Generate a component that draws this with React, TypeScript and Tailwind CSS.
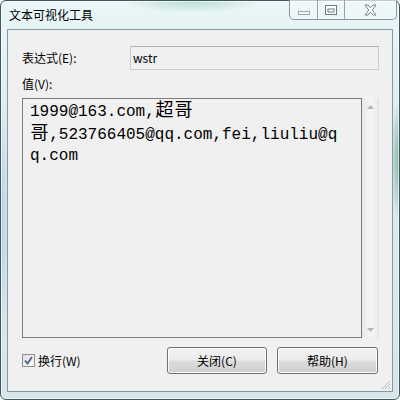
import { useState } from 'react';

const ui = "font-['Noto_Sans_CJK_SC','Noto_Sans',sans-serif]";
const mono = "font-['Liberation_Mono','Noto_Sans_CJK_SC',monospace]";

function Cjk({ ch }: { ch: string }) {
  return <span className="inline-block w-[19.2px] text-center text-[18px] leading-[21.5px]">{ch}</span>;
}

function WinButton({ label }: { label: string }) {
  return (
    <button
      className={`h-[27px] rounded-[3px] border border-[#707070] bg-[linear-gradient(#f2f2f2_0%,#ebebeb_48%,#dddddd_52%,#cfcfcf_100%)] shadow-[inset_0_0_0_1px_#fbfbfb] text-[12px] leading-none text-black ${ui}`}
    >
      {label}
    </button>
  );
}

export default function App() {
  const [wrap, setWrap] = useState(true);

  return (
    <div className="w-[400px] h-[400px] bg-[#f4f8fa]">
      <div className="w-[400px] h-[400px] rounded-[6px] border border-[#44565f] shadow-[inset_0_0_0_1px_rgba(255,255,255,0.6)] bg-[radial-gradient(ellipse_70px_12px_at_48%_0%,rgba(90,170,140,0.35),transparent),radial-gradient(ellipse_8px_60px_at_100%_40%,rgba(60,130,90,0.55),transparent),radial-gradient(ellipse_8px_120px_at_0%_55%,rgba(140,180,220,0.5),transparent),linear-gradient(180deg,#eaf6f7_0%,#d8ebef_35%,#d5e7eb_100%)] flex flex-col px-[6px] pb-[7px]">
        {/* Title bar */}
        <div className="h-[28px] flex items-start justify-between">
          <span className={`mt-[6px] ml-[2px] text-[12px] leading-[16px] text-black ${ui}`}>文本可视化工具</span>
          <div className="-mt-[1px] -mr-[4px] flex h-[20px] rounded-b-[5px] border border-t-0 border-[#8595a0] bg-[linear-gradient(rgba(255,255,255,0.35),rgba(255,255,255,0.15))] shadow-[inset_0_0_0_1px_rgba(255,255,255,0.5)] overflow-hidden">
            <div className="w-[28px] flex items-center justify-center border-r border-[#93a3ab]">
              <svg width="14" height="6" viewBox="0 0 14 6" className="mt-[6px]">
                <rect x="1.5" y="1.5" width="11" height="3" fill="#ffffff" stroke="#9aa4aa" />
              </svg>
            </div>
            <div className="w-[27px] flex items-center justify-center border-r border-[#93a3ab]">
              <svg width="12" height="10" viewBox="0 0 12 10">
                <rect x="0.5" y="0.5" width="11" height="9" fill="#ffffff" stroke="#6f7b82" />
                <rect x="3" y="4" width="6" height="3" fill="#ffffff" stroke="#6f7b82" />
              </svg>
            </div>
            <div className="w-[51px] flex items-center justify-center">
              <svg width="13" height="12" viewBox="0 0 13 12">
                <path
                  d="M1 1 L4 1 L6.5 3.8 L9 1 L12 1 L8.3 6 L12 11 L9 11 L6.5 8.2 L4 11 L1 11 L4.7 6 Z"
                  fill="#ffffff"
                  stroke="#737f86"
                  strokeWidth="1"
                  strokeLinejoin="round"
                />
              </svg>
            </div>
          </div>
        </div>

        {/* Client area */}
        <div className="relative flex-1 flex flex-col border border-[#8899a4] bg-[#f0f0f0] pl-[14px] pr-[13px] pt-[16px]">
          <div className="h-[24px] flex items-center">
            <span className={`w-[108px] text-[12px] text-black ${ui}`}>表达式(E):</span>
            <div className={`flex-1 h-[24px] flex items-center border border-[#c5ced6] border-t-[#abb4bd] bg-[#f0f0f0] pl-[2px] text-[12px] text-black ${ui}`}>
              wstr
            </div>
          </div>

          <div className={`mt-[6px] h-[16px] text-[12px] leading-[16px] text-black ${ui}`}>值(V):</div>

          <div className="mt-[6px] h-[240px] flex">
            <div className={`flex-1 border border-[#7c7c7c] bg-[#f0f0f0] pl-[7px] pt-[2px] text-[16px] leading-[21.5px] text-black ${mono}`}>
              <div className="whitespace-pre">
                1999@163.com,<Cjk ch="超" />
                <Cjk ch="哥" />
              </div>
              <div className="whitespace-pre">
                <Cjk ch="哥" />,523766405@qq.com,fei,liuliu@q
              </div>
              <div className="whitespace-pre">q.com</div>
            </div>
            <div className="w-[17px] flex flex-col justify-between bg-[linear-gradient(90deg,#e8e8e8,#f3f3f3_40%,#f3f3f3_70%,#e9e9e9)] border-r border-[#e2e2e2]">
              <div className="h-[17px] flex items-center justify-center">
                <svg width="7" height="4" viewBox="0 0 7 4">
                  <path d="M0 4 L3.5 0 L7 4 Z" fill="#b5b5b5" />
                </svg>
              </div>
              <div className="h-[17px] flex items-center justify-center">
                <svg width="7" height="4" viewBox="0 0 7 4">
                  <path d="M0 0 L7 0 L3.5 4 Z" fill="#b5b5b5" />
                </svg>
              </div>
            </div>
          </div>

          <div className="mt-[9px] h-[27px] flex items-center">
            <label className={`flex items-center gap-[3px] text-[12px] text-black ${ui}`}>
              <span
                onClick={() => setWrap(!wrap)}
                className="w-[13px] h-[13px] border border-[#8e8f8f] bg-[linear-gradient(135deg,#dcdcdc,#ffffff)] flex items-center justify-center"
              >
                {wrap && (
                  <svg width="9" height="9" viewBox="0 0 9 9">
                    <path d="M1 4.5 L3.5 7.5 L8 1" fill="none" stroke="#4a5f8c" strokeWidth="1.8" />
                  </svg>
                )}
              </span>
              换行(W)
            </label>
            <div className="ml-auto mr-[1px] flex gap-[10px]">
              <div className="w-[100px] flex flex-col">
                <WinButton label="关闭(C)" />
              </div>
              <div className="w-[101px] flex flex-col">
                <WinButton label="帮助(H)" />
              </div>
            </div>
          </div>

          {/* size grip */}
          <svg width="11" height="11" viewBox="0 0 11 11" className="absolute right-[1px] bottom-[1px]">
            <path d="M10 2 L2 10 M10 5 L5 10 M10 8 L8 10" stroke="#b8bcc0" strokeWidth="1" />
          </svg>
        </div>
      </div>
    </div>
  );
}
